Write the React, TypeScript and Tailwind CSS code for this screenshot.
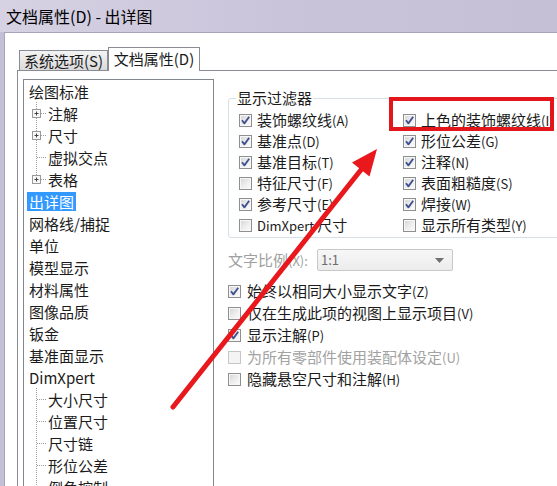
import React from "react";
import clsx from "clsx";

type Option = { label: string; hint?: string; latin?: string; checked?: boolean; disabled?: boolean };

type TreeItem = { text: string; level: 0 | 1; plus?: boolean; last?: boolean; selected?: boolean };

const tree: TreeItem[] = [
  { text: "绘图标准", level: 0 },
  { text: "注解", level: 1, plus: true },
  { text: "尺寸", level: 1, plus: true },
  { text: "虚拟交点", level: 1 },
  { text: "表格", level: 1, plus: true, last: true },
  { text: "出详图", level: 0, selected: true },
  { text: "网格线/捕捉", level: 0 },
  { text: "单位", level: 0 },
  { text: "模型显示", level: 0 },
  { text: "材料属性", level: 0 },
  { text: "图像品质", level: 0 },
  { text: "钣金", level: 0 },
  { text: "基准面显示", level: 0 },
  { text: "DimXpert", level: 0 },
  { text: "大小尺寸", level: 1 },
  { text: "位置尺寸", level: 1 },
  { text: "尺寸链", level: 1 },
  { text: "形位公差", level: 1 },
  { text: "倒角控制", level: 1 },
];

const filterLeft: Option[] = [
  { label: "装饰螺纹线", hint: "(A)", checked: true },
  { label: "基准点", hint: "(D)", checked: true },
  { label: "基准目标", hint: "(T)", checked: true },
  { label: "特征尺寸", hint: "(F)" },
  { label: "参考尺寸", hint: "(E)", checked: true },
  { latin: "DimXpert ", label: "尺寸" },
];

const filterRight: Option[] = [
  { label: "上色的装饰螺纹线", hint: "(I)", checked: true },
  { label: "形位公差", hint: "(G)", checked: true },
  { label: "注释", hint: "(N)", checked: true },
  { label: "表面粗糙度", hint: "(S)", checked: true },
  { label: "焊接", hint: "(W)", checked: true },
  { label: "显示所有类型", hint: "(Y)" },
];

const lower: Option[] = [
  { label: "始终以相同大小显示文字", hint: "(Z)", checked: true },
  { label: "仅在生成此项的视图上显示项目", hint: "(V)" },
  { label: "显示注解", hint: "(P)", checked: true },
  { label: "为所有零部件使用装配体设定", hint: "(U)", disabled: true },
  { label: "隐藏悬空尺寸和注解", hint: "(H)" },
];

function Box({ checked, disabled }: { checked?: boolean; disabled?: boolean }) {
  return (
    <span
      className={clsx(
        "w-[13px] h-[13px] shrink-0 flex items-center justify-center border",
        disabled
          ? "border-[#c6c6c6] bg-[#f4f4f4]"
          : "border-[#8e8f8f] bg-linear-to-br from-[#d4d4d4] via-[#ececec] to-[#fdfdfd] shadow-[inset_0_0_0_1px_#f7f7f7]"
      )}
    >
      {checked && (
        <svg width="11" height="11" viewBox="0 0 11 11">
          <path d="M2 5.3 L4.4 8.4 L9.2 1.8" fill="none" stroke="#3e4f90" strokeWidth="1.8" strokeLinejoin="round" />
        </svg>
      )}
    </span>
  );
}

function Check({ o, h, gap }: { o: Option; h: string; gap: string }) {
  return (
    <div className={clsx("flex items-center whitespace-nowrap", h)}>
      <Box checked={o.checked} disabled={o.disabled} />
      <span className={clsx(gap, o.disabled ? "text-[#a2a2a2]" : "text-[#1b1b1b]")}>
        {o.latin && <span className="text-[13px]">{o.latin}</span>}
        {o.label}
        {o.hint && <span className="text-[13px]">{o.hint}</span>}
      </span>
    </div>
  );
}

// dotted connector + plus box for a child row of the tree
function Connector({ plus, last }: { plus?: boolean; last?: boolean }) {
  return (
    <svg width="22" height="22" viewBox="0 0 22 22" className="shrink-0">
      <line x1="12.5" y1="0" x2="12.5" y2={last ? 11 : 22} stroke="#9d9d9d" strokeDasharray="1 1" />
      <line x1="13" y1="11.5" x2="22" y2="11.5" stroke="#9d9d9d" strokeDasharray="1 1" />
      {plus && (
        <>
          <rect x="8.5" y="7.5" width="8" height="8" fill="#f7f7f7" stroke="#9a9a9a" />
          <line x1="10.5" y1="11.5" x2="14.5" y2="11.5" stroke="#444" />
          <line x1="12.5" y1="9.5" x2="12.5" y2="13.5" stroke="#444" />
        </>
      )}
    </svg>
  );
}

export default function App() {
  return (
    <div className="relative w-[557px] h-[486px] overflow-hidden flex flex-col bg-white text-[15px] text-[#1b1b1b] [font-family:'Noto_Sans_CJK_SC','Noto_Sans',sans-serif]">
      {/* title bar */}
      <div className="h-[32px] shrink-0 flex items-center pl-[6px] text-[16px] text-black bg-linear-to-r from-[#d6d2e3] via-[#c9c4da] to-[#c5c0d6]">
        文档属性(D) - 出详图
      </div>

      <div className="flex-1 flex min-h-0">
        <div className="w-[4px] bg-[#c4bed6] shrink-0" />
        <div className="flex-1 flex flex-col border-l border-t border-[#a8a4ba] bg-white pl-[12px]">
          {/* tabs */}
          <div className="mt-[14px] h-[23px] flex items-end pl-[2px]">
            <div className="w-[89px] h-[20px] flex items-center justify-center pt-[2px] border border-b-0 border-[#898c95] bg-linear-to-b from-[#f3f3f3] to-[#dadada]">
              系统选项(S)
            </div>
            <div className="relative z-10 w-[92px] h-[24px] -mb-px flex items-center justify-center border border-b-0 border-[#898c95] bg-white">
              文档属性(D)
            </div>
          </div>

          {/* tab page */}
          <div className="flex-1 flex border-t border-l border-[#898c95] pt-[8px] pl-[5px]">
            {/* tree */}
            <div className="w-[191px] h-[440px] shrink-0 border border-[#828790] bg-white">
              {tree.map((t) => (
                <div key={t.text} className={clsx("h-[22px] flex items-center whitespace-nowrap", t.level === 0 && "pl-[3px]")}>
                  {t.level === 1 && <Connector plus={t.plus} last={t.last} />}
                  <span
                    className={clsx(
                      "px-[2px] h-[19px] leading-[19px]",
                      t.selected && "bg-[#3399ff] text-white"
                    )}
                  >
                    {t.text}
                  </span>
                </div>
              ))}
            </div>

            {/* options */}
            <div className="ml-[14px] pt-[9px] flex flex-col">
              <fieldset className="w-[360px] border border-[#d5dfe5] rounded-[3px] pl-[10px] pt-[2px] pb-[1px]">
                <legend className="ml-[-3px] px-[1px] leading-[20px]">显示过滤器</legend>
                <div className="grid grid-cols-[164px_1fr]">
                  <div className="flex flex-col">
                    {filterLeft.map((o) => (
                      <Check key={o.label} o={o} h="h-[21px]" gap="ml-[5px]" />
                    ))}
                  </div>
                  <div className="flex flex-col">
                    {filterRight.map((o) => (
                      <Check key={o.label} o={o} h="h-[21px]" gap="ml-[5px]" />
                    ))}
                  </div>
                </div>
              </fieldset>

              <div className="mt-[11px] h-[22px] flex items-center">
                <span className="w-[89px] text-[#a0a0a0]">
                  文字比例<span className="text-[13px]">(X):</span>
                </span>
                <div className="w-[136px] h-[22px] flex items-center justify-between pl-[3px] pr-[8px] border border-[#c8c8c8] rounded-[2px] bg-linear-to-b from-[#f7f7f7] to-[#ececec] text-[13px] text-[#6e6e6e]">
                  <span>1:1</span>
                  <svg width="9" height="5" viewBox="0 0 9 5">
                    <path d="M0 0 H9 L4.5 5 Z" fill="#707070" />
                  </svg>
                </div>
              </div>

              <div className="mt-[9px] flex flex-col">
                {lower.map((o) => (
                  <Check key={o.label} o={o} h="h-[22px]" gap="ml-[6px]" />
                ))}
              </div>
            </div>
          </div>
        </div>
      </div>

      {/* annotation: red box */}
      <div className="absolute left-[389px] top-[97px] w-[165px] h-[34px] border-4 border-[#e3161c] pointer-events-none" />

      {/* annotation: red arrow */}
      <svg className="absolute left-0 top-0 pointer-events-none" width="557" height="486" viewBox="0 0 557 486">
        <line x1="173" y1="407" x2="364" y2="166" stroke="#e8181d" strokeWidth="5" strokeLinecap="round" />
        <polygon points="377,149 369.5,176.5 352,162.5" fill="#e8181d" />
      </svg>
    </div>
  );
}
